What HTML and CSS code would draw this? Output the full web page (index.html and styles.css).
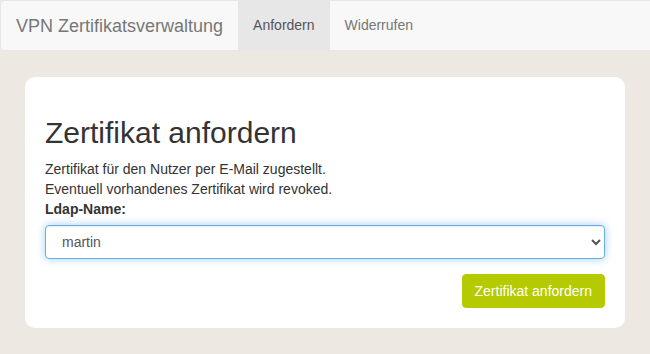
FILE: index.html
```html
<!DOCTYPE html>
<html lang="de">
<head>
<meta charset="utf-8">
<title>VPN Zertifikatsverwaltung</title>
<link rel="stylesheet" href="styles.css">
</head>
<body>
<nav class="navbar">
  <a class="brand" href="#">VPN Zertifikatsverwaltung</a>
  <ul class="nav">
    <li class="active"><a href="#">Anfordern</a></li>
    <li><a href="#">Widerrufen</a></li>
  </ul>
</nav>
<main class="container">
  <section class="card">
    <h2 class="title">Zertifikat anfordern</h2>
    <p class="info">Zertifikat für den Nutzer per E-Mail zugestellt.<br>Eventuell vorhandenes Zertifikat wird revoked.</p>
    <label class="label" for="ldap">Ldap-Name:</label>
    <select id="ldap" class="select">
      <option>martin</option>
    </select>
    <div class="actions">
      <button class="btn" type="button">Zertifikat anfordern</button>
    </div>
  </section>
</main>
</body>
</html>
```

FILE: styles.css
```css
* { box-sizing: border-box; }
html, body {
  margin: 0;
  padding: 0;
}
body {
  background: #ede9e2;
  font-family: "Liberation Sans", Arial, sans-serif;
  font-size: 14px;
  line-height: 20px;
  color: #333;
}
.navbar {
  display: flex;
  align-items: stretch;
  height: 51px;
  background: #f8f8f8;
  border: 1px solid #e7e7e7;
  border-right: none;
  border-radius: 4px 0 0 4px;
}
.brand {
  display: block;
  padding: 15px 15px;
  font-size: 18px;
  line-height: 20px;
  color: #777;
  text-decoration: none;
}
.nav {
  display: flex;
  list-style: none;
  margin: 0;
  padding: 0;
}
.nav li a {
  display: block;
  padding: 15px 15px;
  line-height: 19px;
  color: #777;
  text-decoration: none;
}
.nav li.active a {
  background: #e7e7e7;
  color: #555;
}
.container {
  padding: 26px 25px;
}
.card {
  background: #fff;
  border-radius: 10px;
  padding: 19px 20px 20px;
}
.title {
  margin: 20px 0 10px;
  font-size: 30px;
  font-weight: 500;
  line-height: 33px;
  color: #333;
}
.info {
  margin: 0;
}
.label {
  display: block;
  font-weight: bold;
  margin-bottom: 6px;
}
.select {
  display: block;
  width: 100%;
  height: 34px;
  padding: 6px 12px;
  font-family: inherit;
  font-size: 14px;
  color: #555;
  background: #fff;
  border: 1px solid #66afe9;
  border-radius: 4px;
  box-shadow: inset 0 1px 1px rgba(0,0,0,.075), 0 0 8px rgba(102,175,233,.6);
  outline: none;
}
.actions {
  display: flex;
  justify-content: flex-end;
  margin-top: 15px;
}
.btn {
  height: 34px;
  padding: 6px 12px;
  font-family: inherit;
  font-size: 14px;
  line-height: 20px;
  color: #fff;
  background: #b5cb00;
  border: 1px solid #b5cb00;
  border-radius: 4px;
  cursor: pointer;
}
```
